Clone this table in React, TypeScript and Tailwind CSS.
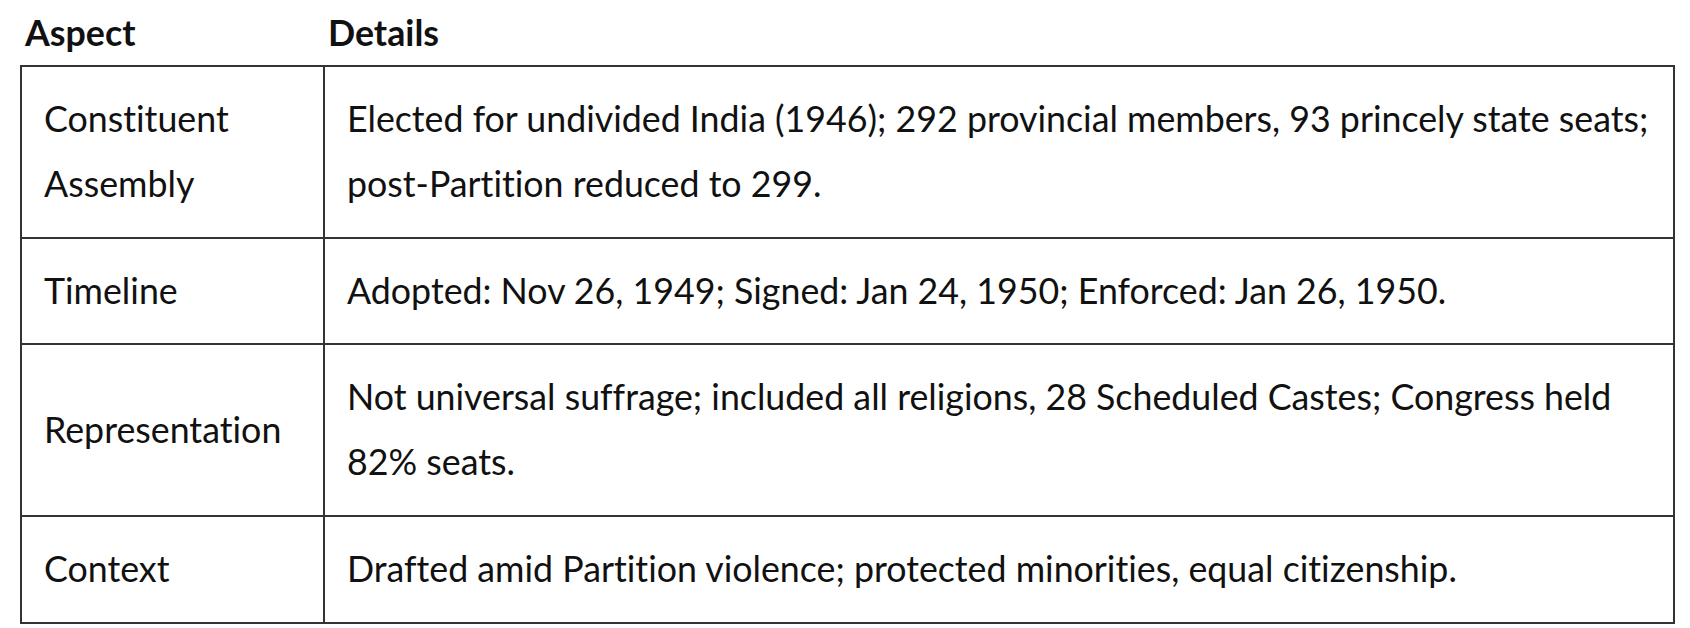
const rows = [
  {
    aspect: 'Constituent Assembly',
    details:
      'Elected for undivided India (1946); 292 provincial members, 93 princely state seats; post-Partition reduced to 299.',
  },
  {
    aspect: 'Timeline',
    details: 'Adopted: Nov 26, 1949; Signed: Jan 24, 1950; Enforced: Jan 26, 1950.',
  },
  {
    aspect: 'Representation',
    details:
      'Not universal suffrage; included all religions, 28 Scheduled Castes; Congress held 82% seats.',
  },
  {
    aspect: 'Context',
    details: 'Drafted amid Partition violence; protected minorities, equal citizenship.',
  },
];

export default function App() {
  return (
    <div className="min-h-screen bg-white pl-5 font-['Lato',sans-serif] text-[#111] [font-variant-ligatures:none]">
      <table className="w-[1655px] table-fixed border-collapse">
        <colgroup>
          <col className="w-[303px]" />
          <col />
        </colgroup>
        <thead>
          <tr>
            <th className="h-[65px] px-1 text-left align-middle text-[35.75px] font-bold leading-[65px]">Aspect</th>
            <th className="h-[65px] px-1 text-left align-middle text-[35.75px] font-bold leading-[65px]">Details</th>
          </tr>
        </thead>
        <tbody>
          {rows.map((row) => (
            <tr key={row.aspect}>
              <td className="border-2 border-[#333] px-[22px] py-5 align-middle text-[35.75px] leading-[64.75px]">
                {row.aspect}
              </td>
              <td className="border-2 border-[#333] px-[22px] py-5 align-middle text-[35.75px] leading-[64.75px]">
                {row.details}
              </td>
            </tr>
          ))}
        </tbody>
      </table>
    </div>
  );
}
